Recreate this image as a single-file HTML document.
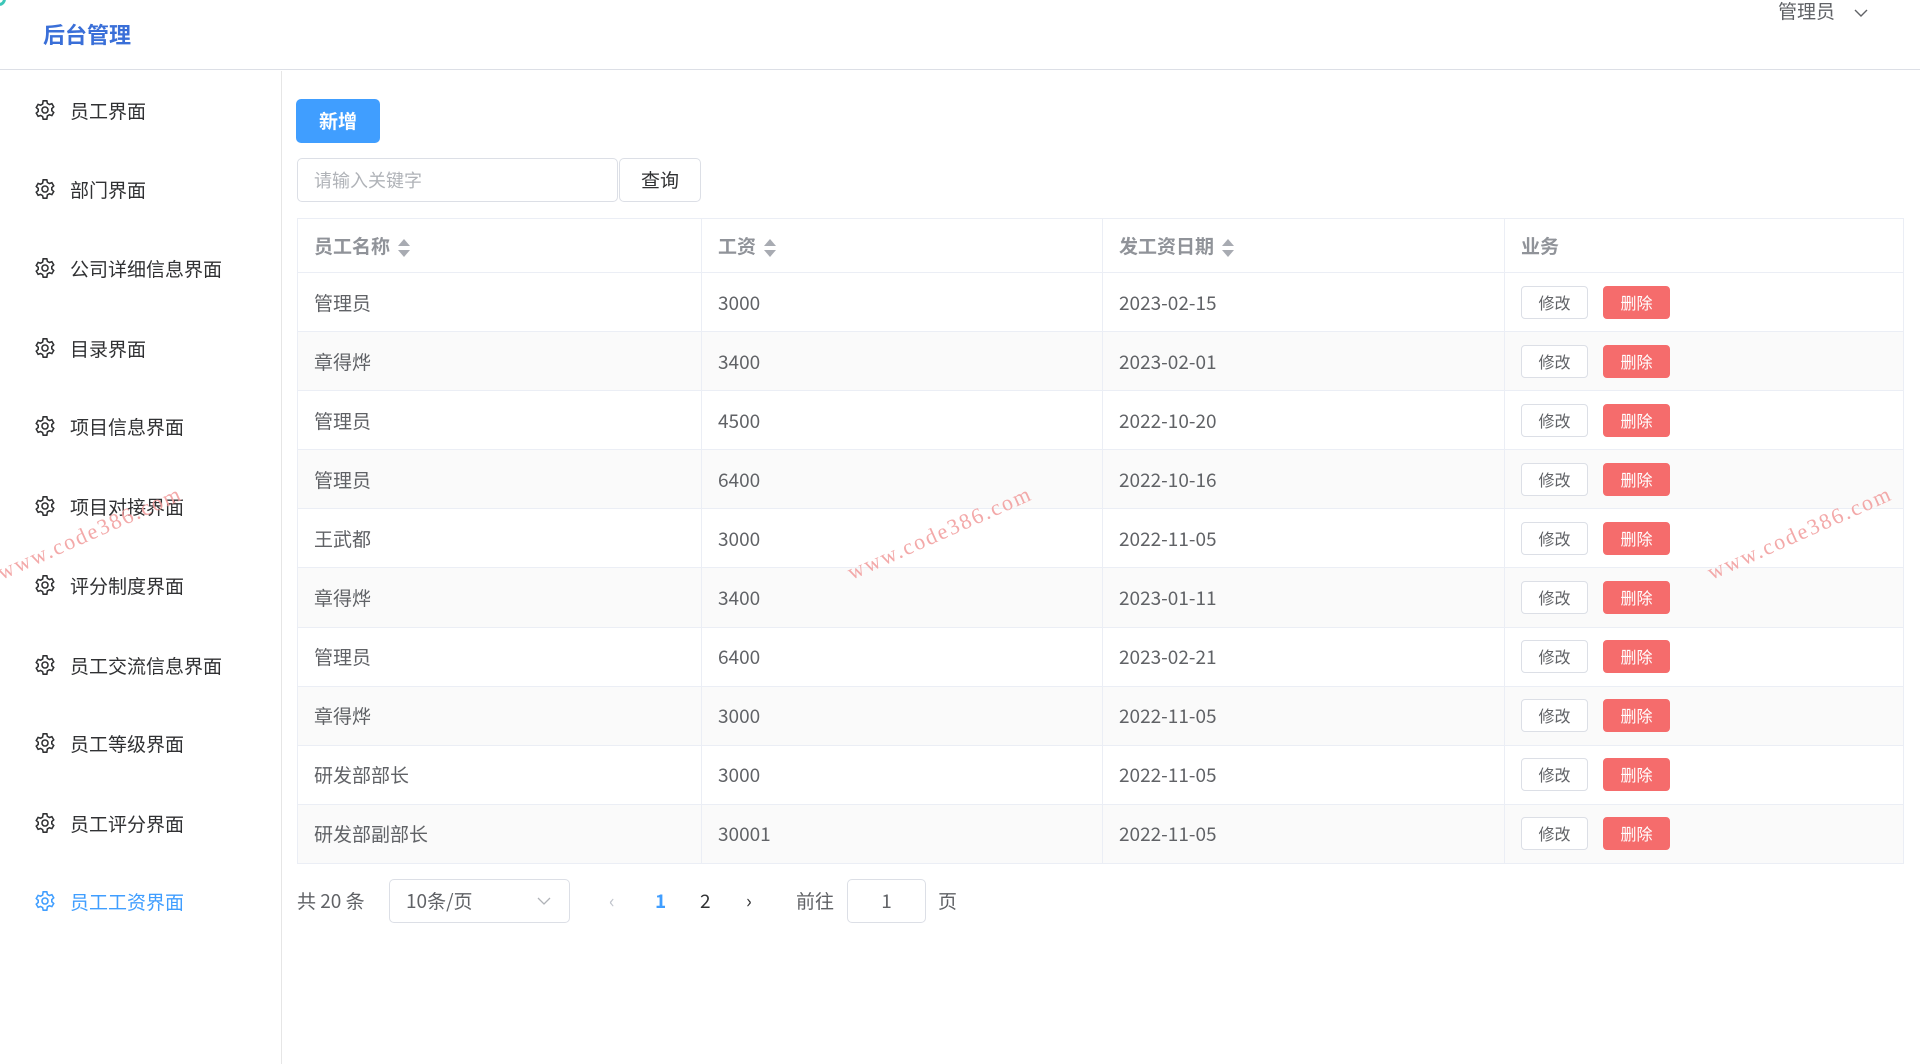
<!DOCTYPE html>
<html><head><meta charset="utf-8"><style>
*{box-sizing:border-box;margin:0;padding:0}
body{width:1920px;height:1064px;overflow:hidden;background:#fff;font-family:"Noto Sans CJK SC","Liberation Sans",sans-serif;color:#606266;position:relative}
.hdr{position:absolute;left:0;top:0;width:1920px;height:70px;border-bottom:1px solid #dcdfe6}
.title{position:absolute;left:43px;top:18px;font-size:22px;font-weight:bold;color:#3a6fd8}
.user{position:absolute;left:1778px;top:-3px;font-size:19px;color:#606266}
.side{position:absolute;left:0;top:71px;width:282px;height:993px;border-right:1px solid #e6e6e6}
.mi{position:absolute;left:34px;font-size:19px;color:#303133;display:flex;align-items:center;height:30px}
.mi svg{width:22px;height:22px;margin-right:14px}
.mi.act{color:#409eff}
.btn-add{position:absolute;left:296px;top:99px;width:84px;height:44px;background:#409eff;color:#fff;border-radius:5px;font-size:19px;font-weight:bold;text-align:center;line-height:44px}
.inp{position:absolute;left:297px;top:158px;width:321px;height:44px;border:1px solid #dcdfe6;border-radius:5px;font-size:18px;color:#b0b3b8;padding-left:16px;line-height:42px}
.q{position:absolute;left:619px;top:158px;width:82px;height:44px;border:1px solid #dcdfe6;border-radius:5px;font-size:19px;color:#303133;text-align:center;line-height:42px}
table{position:absolute;left:297px;top:218px;width:1607px;border-collapse:collapse;border:1px solid #ebeef5;font-size:19px}
th{height:54px;text-align:left;padding-left:16px;color:#909399;font-weight:bold;border-bottom:1px solid #ebeef5;border-right:1px solid #ebeef5}
td{height:59.1px;padding-left:16px;border-bottom:1px solid #ebeef5;border-right:1px solid #ebeef5;color:#606266}
tr:nth-child(odd) td{background:#fafafa}
.s{display:inline-block;vertical-align:middle;margin-left:8px;width:12px;height:18px;position:relative}
.s:before,.s:after{content:"";position:absolute;left:0;border-left:6px solid transparent;border-right:6px solid transparent}
.s:before{top:0;border-bottom:7px solid #a8abb2}.s:after{bottom:0;border-top:7px solid #a8abb2}
.b1,.b2{display:inline-block;width:67px;height:33px;line-height:31px;text-align:center;border-radius:4px;font-size:16px;vertical-align:middle}
.b1{border:1px solid #dcdfe6;color:#606266;background:#fff}
.b2{background:#f56c6c;color:#fff;margin-left:15px;border:1px solid #f56c6c}
.pg{position:absolute;top:879px;height:44px;line-height:44px;font-size:19px;color:#606266}
.wm{position:absolute;color:#f2a0a0;font-size:22px;font-family:"Liberation Serif",serif;transform:rotate(-24deg);letter-spacing:2px;opacity:.9}
</style></head><body>
<div style="position:absolute;left:-8px;top:-8px;width:14px;height:14px;border-radius:50%;border:3px solid #3cc6b8"></div>
<div class="hdr"><div class="title">后台管理</div>
<div class="user">管理员 <svg width="16" height="10" style="margin-left:14px;vertical-align:middle" viewBox="0 0 16 10"><path d="M2 2l6 6 6-6" fill="none" stroke="#606266" stroke-width="1.4"/></svg></div></div>
<div class="side">
<svg width="0" height="0" style="position:absolute"><defs><symbol id="g" viewBox="0 0 24 24"><path fill="none" stroke="currentColor" stroke-width="1.7" d="M10 2h4l.6 2.8 2.2 1.2 2.7-.9 2 3.4-2.1 1.9v2.4l2.1 1.9-2 3.4-2.7-.9-2.2 1.2L14 22h-4l-.6-2.8-2.2-1.2-2.7.9-2-3.4 2.1-1.9v-2.4L2.5 9.3l2-3.4 2.7.9 2.200-1.2z"/><circle cx="12" cy="12" r="3.3" fill="none" stroke="currentColor" stroke-width="1.7"/></symbol></defs></svg>
</div>
<div class="mi" style="top:95px"><svg><use href="#g"/></svg>员工界面</div>
<div class="mi" style="top:174px"><svg><use href="#g"/></svg>部门界面</div>
<div class="mi" style="top:253px"><svg><use href="#g"/></svg>公司详细信息界面</div>
<div class="mi" style="top:333px"><svg><use href="#g"/></svg>目录界面</div>
<div class="mi" style="top:411px"><svg><use href="#g"/></svg>项目信息界面</div>
<div class="mi" style="top:491px"><svg><use href="#g"/></svg>项目对接界面</div>
<div class="mi" style="top:570px"><svg><use href="#g"/></svg>评分制度界面</div>
<div class="mi" style="top:650px"><svg><use href="#g"/></svg>员工交流信息界面</div>
<div class="mi" style="top:728px"><svg><use href="#g"/></svg>员工等级界面</div>
<div class="mi" style="top:808px"><svg><use href="#g"/></svg>员工评分界面</div>
<div class="mi act" style="top:886px"><svg><use href="#g"/></svg>员工工资界面</div>

<div class="btn-add">新增</div>
<div class="inp">请输入关键字</div>
<div class="q">查询</div>
<table>
<colgroup><col style="width:404px"><col style="width:401px"><col style="width:402px"><col></colgroup>
<tr><th>员工名称<span class="s"></span></th><th>工资<span class="s"></span></th><th>发工资日期<span class="s"></span></th><th>业务</th></tr>
<tr><td>管理员</td><td>3000</td><td>2023-02-15</td><td><span class="b1">修改</span><span class="b2">删除</span></td></tr>
<tr><td>章得烨</td><td>3400</td><td>2023-02-01</td><td><span class="b1">修改</span><span class="b2">删除</span></td></tr>
<tr><td>管理员</td><td>4500</td><td>2022-10-20</td><td><span class="b1">修改</span><span class="b2">删除</span></td></tr>
<tr><td>管理员</td><td>6400</td><td>2022-10-16</td><td><span class="b1">修改</span><span class="b2">删除</span></td></tr>
<tr><td>王武都</td><td>3000</td><td>2022-11-05</td><td><span class="b1">修改</span><span class="b2">删除</span></td></tr>
<tr><td>章得烨</td><td>3400</td><td>2023-01-11</td><td><span class="b1">修改</span><span class="b2">删除</span></td></tr>
<tr><td>管理员</td><td>6400</td><td>2023-02-21</td><td><span class="b1">修改</span><span class="b2">删除</span></td></tr>
<tr><td>章得烨</td><td>3000</td><td>2022-11-05</td><td><span class="b1">修改</span><span class="b2">删除</span></td></tr>
<tr><td>研发部部长</td><td>3000</td><td>2022-11-05</td><td><span class="b1">修改</span><span class="b2">删除</span></td></tr>
<tr><td>研发部副部长</td><td>30001</td><td>2022-11-05</td><td><span class="b1">修改</span><span class="b2">删除</span></td></tr>
</table>
<div class="pg" style="left:297px">共 20 条</div>
<div class="pg" style="left:389px;width:181px;border:1px solid #dcdfe6;border-radius:5px;padding-left:16px;line-height:42px">10条/页<svg width="14" height="9" viewBox="0 0 14 9" style="position:absolute;right:18px;top:17px"><path d="M1 1l6 6 6-6" fill="none" stroke="#b0b3b8" stroke-width="1.3"/></svg></div>
<div class="pg" style="left:609px;color:#c0c4cc">‹</div>
<div class="pg" style="left:655px;color:#409eff;font-weight:bold">1</div>
<div class="pg" style="left:700px;color:#303133">2</div>
<div class="pg" style="left:746px;color:#303133">›</div>
<div class="pg" style="left:796px">前往</div>
<div class="pg" style="left:847px;width:79px;border:1px solid #dcdfe6;border-radius:5px;text-align:center;line-height:42px">1</div>
<div class="pg" style="left:938px">页</div>
<div class="wm" style="left:-10px;top:520px">www.code386.com</div>
<div class="wm" style="left:840px;top:520px">www.code386.com</div>
<div class="wm" style="left:1700px;top:520px">www.code386.com</div>
</body></html>
